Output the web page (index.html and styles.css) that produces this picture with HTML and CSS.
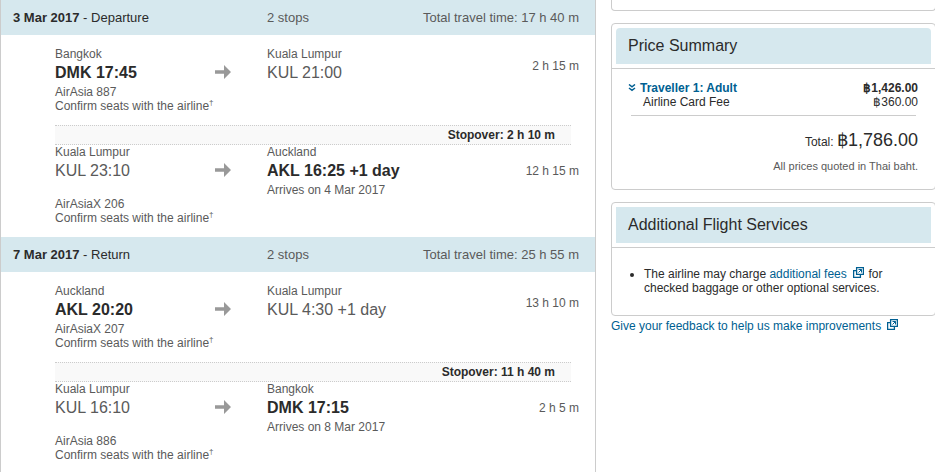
FILE: index.html
```html
<!DOCTYPE html>
<html lang="en">
<head>
<meta charset="utf-8">
<title>Flight itinerary</title>
<link rel="stylesheet" href="styles.css">
</head>
<body>
<svg class="defs" aria-hidden="true">
  <symbol id="arrow" viewBox="0 0 16 14"><path d="M0 5.300h9V0l7 7-7 7V8.700H0z" fill="#999"/></symbol>
  <symbol id="external" viewBox="0 0 11 11">
    <path d="M3 3.600H.6v6.800h6.800V8" fill="none" stroke="currentColor" stroke-width="1.300"/>
    <path d="M3.600 .6h6.800v6.800H3.600z" fill="none" stroke="currentColor" stroke-width="1.300"/>
    <path d="M5.500 2.500h3v3M8.500 2.500l-3 3" fill="none" stroke="currentColor"/>
  </symbol>
  <symbol id="chevrons" viewBox="0 0 8 8"><path d="M1 .5l3 2.300L7 .5M1 4l3 2.300L7 4" fill="none" stroke="currentColor" stroke-width="1.500"/></symbol>
</svg>
<div class="page">
  <main class="itinerary">
    <section class="flight">
      <h2 class="flight-header">
        <span class="flight-date"><b>3 Mar 2017</b> - Departure</span>
        <span>2 stops</span>
        <span>Total travel time: 17 h 40 m</span>
      </h2>
      <div class="leg leg-first">
        <div class="leg-route">
          <div class="place"><div>Bangkok</div><div class="time strong">DMK 17:45</div></div>
          <svg class="arrow" aria-hidden="true"><use href="#arrow"/></svg>
          <div class="place"><div>Kuala Lumpur</div><div class="time">KUL 21:00</div></div>
          <div class="duration">2 h 15 m</div>
        </div>
        <div>AirAsia 887</div>
        <div>Confirm seats with the airline<sup>†</sup></div>
      </div>
      <div class="stopover">Stopover: 2 h 10 m</div>
      <div class="leg">
        <div class="leg-route">
          <div class="place"><div>Kuala Lumpur</div><div class="time">KUL 23:10</div></div>
          <svg class="arrow" aria-hidden="true"><use href="#arrow"/></svg>
          <div class="place"><div>Auckland</div><div class="time strong">AKL 16:25 +1 day</div><div>Arrives on 4 Mar 2017</div></div>
          <div class="duration">12 h 15 m</div>
        </div>
        <div>AirAsiaX 206</div>
        <div>Confirm seats with the airline<sup>†</sup></div>
      </div>
    </section>
    <section class="flight">
      <h2 class="flight-header">
        <span class="flight-date"><b>7 Mar 2017</b> - Return</span>
        <span>2 stops</span>
        <span>Total travel time: 25 h 55 m</span>
      </h2>
      <div class="leg leg-first">
        <div class="leg-route">
          <div class="place"><div>Auckland</div><div class="time strong">AKL 20:20</div></div>
          <svg class="arrow" aria-hidden="true"><use href="#arrow"/></svg>
          <div class="place"><div>Kuala Lumpur</div><div class="time">KUL 4:30 +1 day</div></div>
          <div class="duration">13 h 10 m</div>
        </div>
        <div>AirAsiaX 207</div>
        <div>Confirm seats with the airline<sup>†</sup></div>
      </div>
      <div class="stopover">Stopover: 11 h 40 m</div>
      <div class="leg">
        <div class="leg-route">
          <div class="place"><div>Kuala Lumpur</div><div class="time">KUL 16:10</div></div>
          <svg class="arrow" aria-hidden="true"><use href="#arrow"/></svg>
          <div class="place"><div>Bangkok</div><div class="time strong">DMK 17:15</div><div>Arrives on 8 Mar 2017</div></div>
          <div class="duration">2 h 5 m</div>
        </div>
        <div>AirAsia 886</div>
        <div>Confirm seats with the airline<sup>†</sup></div>
      </div>
    </section>
  </main>
  <aside class="sidebar">
    <div class="card card-end"></div>
    <section class="card">
      <div class="card-header"><h2 class="card-title rounded">Price Summary</h2></div>
      <div class="prices">
        <table class="price-table">
          <tr class="traveller">
            <th scope="row"><a href="#"><svg class="chevrons" aria-hidden="true"><use href="#chevrons"/></svg>Traveller 1: Adult</a></th>
            <td>฿1,426.00</td>
          </tr>
          <tr class="fee"><th scope="row">Airline Card Fee</th><td>฿360.00</td></tr>
        </table>
        <hr class="rule">
        <div class="total">Total: <span class="total-amount">฿1,786.00</span></div>
        <div class="note">All prices quoted in Thai baht.</div>
      </div>
    </section>
    <section class="card">
      <div class="card-header"><h2 class="card-title">Additional Flight Services</h2></div>
      <ul class="services">
        <li>The airline may charge <a href="#">additional fees <svg class="external" aria-hidden="true"><use href="#external"/></svg></a> for checked baggage or other optional services.</li>
      </ul>
    </section>
    <a class="feedback" href="#">Give your feedback to help us make improvements <svg class="external" aria-hidden="true"><use href="#external"/></svg></a>
  </aside>
</div>
</body>
</html>
```
FILE: styles.css
```css
* { box-sizing: border-box; }

body {
  margin: 0;
  overflow-x: hidden;
  background: #fff;
  color: #2b2b2b;
  font: 12px/14px "Liberation Sans", Arial, sans-serif;
}

h2 { margin: 0; font-weight: normal; }
a { color: #005f92; text-decoration: none; }
.defs { display: none; }

.page {
  display: grid;
  grid-template-columns: minmax(0, 1fr) 325px;
  gap: 15px;
  margin-right: -1px;
}

/* Itinerary */
.itinerary {
  border: solid #ccc;
  border-width: 0 1px;
  color: #5a5a5a;
}

.flight-header {
  display: grid;
  grid-template-columns: 254px 1fr auto;
  padding: 0 16px 0 12px;
  background: #d6e8ee;
  font-size: 13px;
  line-height: 35px;
}

.flight-date { color: #2b2b2b; }

.leg { padding: 0 16px 12px 54px; }
.leg-first { padding-top: 12px; }

.leg-route {
  display: grid;
  grid-template-columns: 160px 52px 1fr auto;
}

.time { font-size: 16px; line-height: 24px; }
.strong { color: #2b2b2b; font-weight: bold; }
.arrow { width: 16px; height: 14px; margin-top: 18px; }
.duration { align-self: center; }

sup { font-size: 8px; line-height: 0; }

.stopover {
  margin: 0 24px 0 54px;
  padding-right: 16px;
  border: dotted #ccc;
  border-width: 1px 0;
  background: #f9f9f9;
  color: #2b2b2b;
  font-weight: bold;
  line-height: 18px;
  text-align: right;
}

/* Sidebar */
.card {
  margin-bottom: 12px;
  border: 1px solid #ccc;
  border-radius: 4px;
}

.card-end {
  height: 11px;
  border-top: 0;
  border-radius: 0 0 4px 4px;
}

.card-header { padding: 4px; border-bottom: 1px solid #ccc; }

.card-title {
  padding: 0 12px;
  background: #d6e8ee;
  font-size: 16px;
  line-height: 36px;
}

.rounded { border-radius: 4px 4px 0 0; }

.prices { padding: 12px 17px 16px 16px; }

.price-table { width: 100%; border-collapse: collapse; }
.price-table th { padding: 0; font-weight: normal; text-align: left; }
.price-table td { padding: 0; text-align: right; }
.price-table .traveller > * { font-weight: bold; }
.price-table .fee th { padding-left: 15px; }
.chevrons { width: 8px; height: 8px; margin-right: 4px; }

.rule {
  margin: 6px 2px 12px 3px;
  border: 0;
  border-top: 1px solid #ccc;
}

.total { line-height: 24px; text-align: right; }
.total-amount { font-size: 18px; }
.note { margin-top: 5px; color: #5a5a5a; font-size: 11px; text-align: right; }

.services { margin: 0; padding: 19px 40px 20px 32px; }
.external { width: 11px; height: 11px; margin: 0 1px 0 3px; }
.feedback { display: block; margin-top: -9px; }
```
